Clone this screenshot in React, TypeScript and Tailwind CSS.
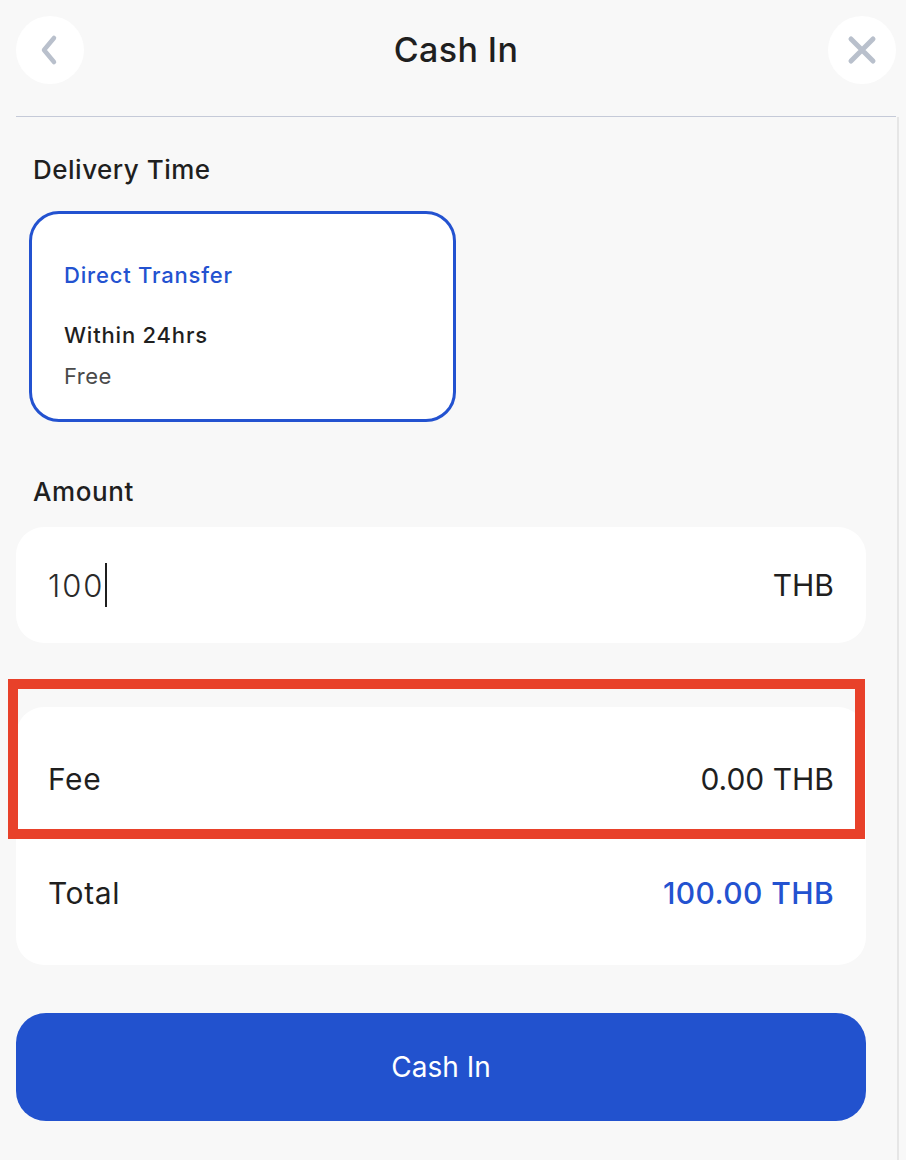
import React from "react";

function RoundButton({ children }: { children: React.ReactNode }) {
  return (
    <div className="w-[68px] h-[68px] rounded-full bg-white flex items-center justify-center">
      {children}
    </div>
  );
}

function SummaryRow({ label, value, accent }: { label: string; value: string; accent?: boolean }) {
  return (
    <div className="h-[114px] flex items-center justify-between px-[32px] text-[30px] leading-none">
      <span className="text-[#1f1f1f] tracking-[0.6px]">{label}</span>
      <span className={accent ? "text-[#2352d0] font-medium tracking-[0.4px]" : "text-[#1f1f1f]"}>{value}</span>
    </div>
  );
}

export default function App() {
  return (
    <div
      className="relative w-[906px] h-[1160px] bg-[#f8f8f8] overflow-hidden flex flex-col"
      style={{ fontFamily: "Inter, 'Noto Sans', sans-serif" }}
    >
      {/* header */}
      <div className="flex items-center justify-between pl-[16px] pr-[10px] pt-[16px]">
        <RoundButton>
          <svg width="24" height="32" viewBox="0 0 24 32" fill="none">
            <path d="M16 4 L6 16 L16 28" stroke="#b9c0cc" strokeWidth="4.5" strokeLinecap="round" strokeLinejoin="round" />
          </svg>
        </RoundButton>
        <h1 className="text-[34px] leading-none font-medium text-[#1f1f1f] tracking-[0.4px]">Cash In</h1>
        <RoundButton>
          <svg width="30" height="30" viewBox="0 0 30 30" fill="none">
            <path d="M4 4 L26 26 M26 4 L4 26" stroke="#b9c0cc" strokeWidth="5" strokeLinecap="round" />
          </svg>
        </RoundButton>
      </div>

      <div className="mt-[32px] ml-[16px] w-[880px] h-px bg-[#c5cad8]" />

      <div className="flex flex-1">
        <div className="ml-[16px] w-[850px] flex flex-col">
          <div className="mt-[37px] pl-[17px] text-[26px] leading-[32px] font-medium text-[#1f1f1f] tracking-[0.5px]">Delivery Time</div>

          <div className="mt-[25px] ml-[13px] w-[427px] h-[211px] rounded-[30px] border-[3px] border-[#2352d0] bg-white pl-[32px] pt-[46px] flex flex-col">
            <span className="text-[22px] leading-[30px] font-medium text-[#2352d0] tracking-[0.8px]">Direct Transfer</span>
            <span className="mt-[30px] text-[22px] leading-[30px] font-medium text-[#1f1f1f] tracking-[0.8px]">Within 24hrs</span>
            <span className="mt-[11px] text-[22px] leading-[30px] text-[#4a4a4a] tracking-[0.5px]">Free</span>
          </div>

          <div className="mt-[54px] pl-[17px] text-[26px] leading-[32px] font-medium text-[#1f1f1f] tracking-[0.6px]">Amount</div>

          <div className="mt-[19px] h-[116px] rounded-[28px] bg-white flex items-center justify-between px-[32px]">
            <div className="flex items-center">
              <span className="text-[31px] leading-none font-light text-[#2a2a2a] tracking-[2px]">100</span>
              <span className="w-[2px] h-[44px] bg-[#1f1f1f]" />
            </div>
            <span className="text-[30px] leading-none text-[#1f1f1f]">THB</span>
          </div>

          <div className="mt-[64px] rounded-[28px] bg-white py-[15px] flex flex-col">
            <SummaryRow label="Fee" value="0.00 THB" />
            <SummaryRow label="Total" value="100.00 THB" accent />
          </div>

          <button className="mt-[48px] h-[108px] rounded-[30px] bg-[#2252ce] text-white text-[28px] leading-none">
            Cash In
          </button>
        </div>
        <div className="w-[31px]" />
        <div className="w-[2px] bg-[#e6e6e6]" />
      </div>

      {/* annotation highlight */}
      <div className="absolute left-[8px] top-[679px] w-[857px] h-[160px] border-[10px] border-[#e8412a] pointer-events-none" />
    </div>
  );
}
